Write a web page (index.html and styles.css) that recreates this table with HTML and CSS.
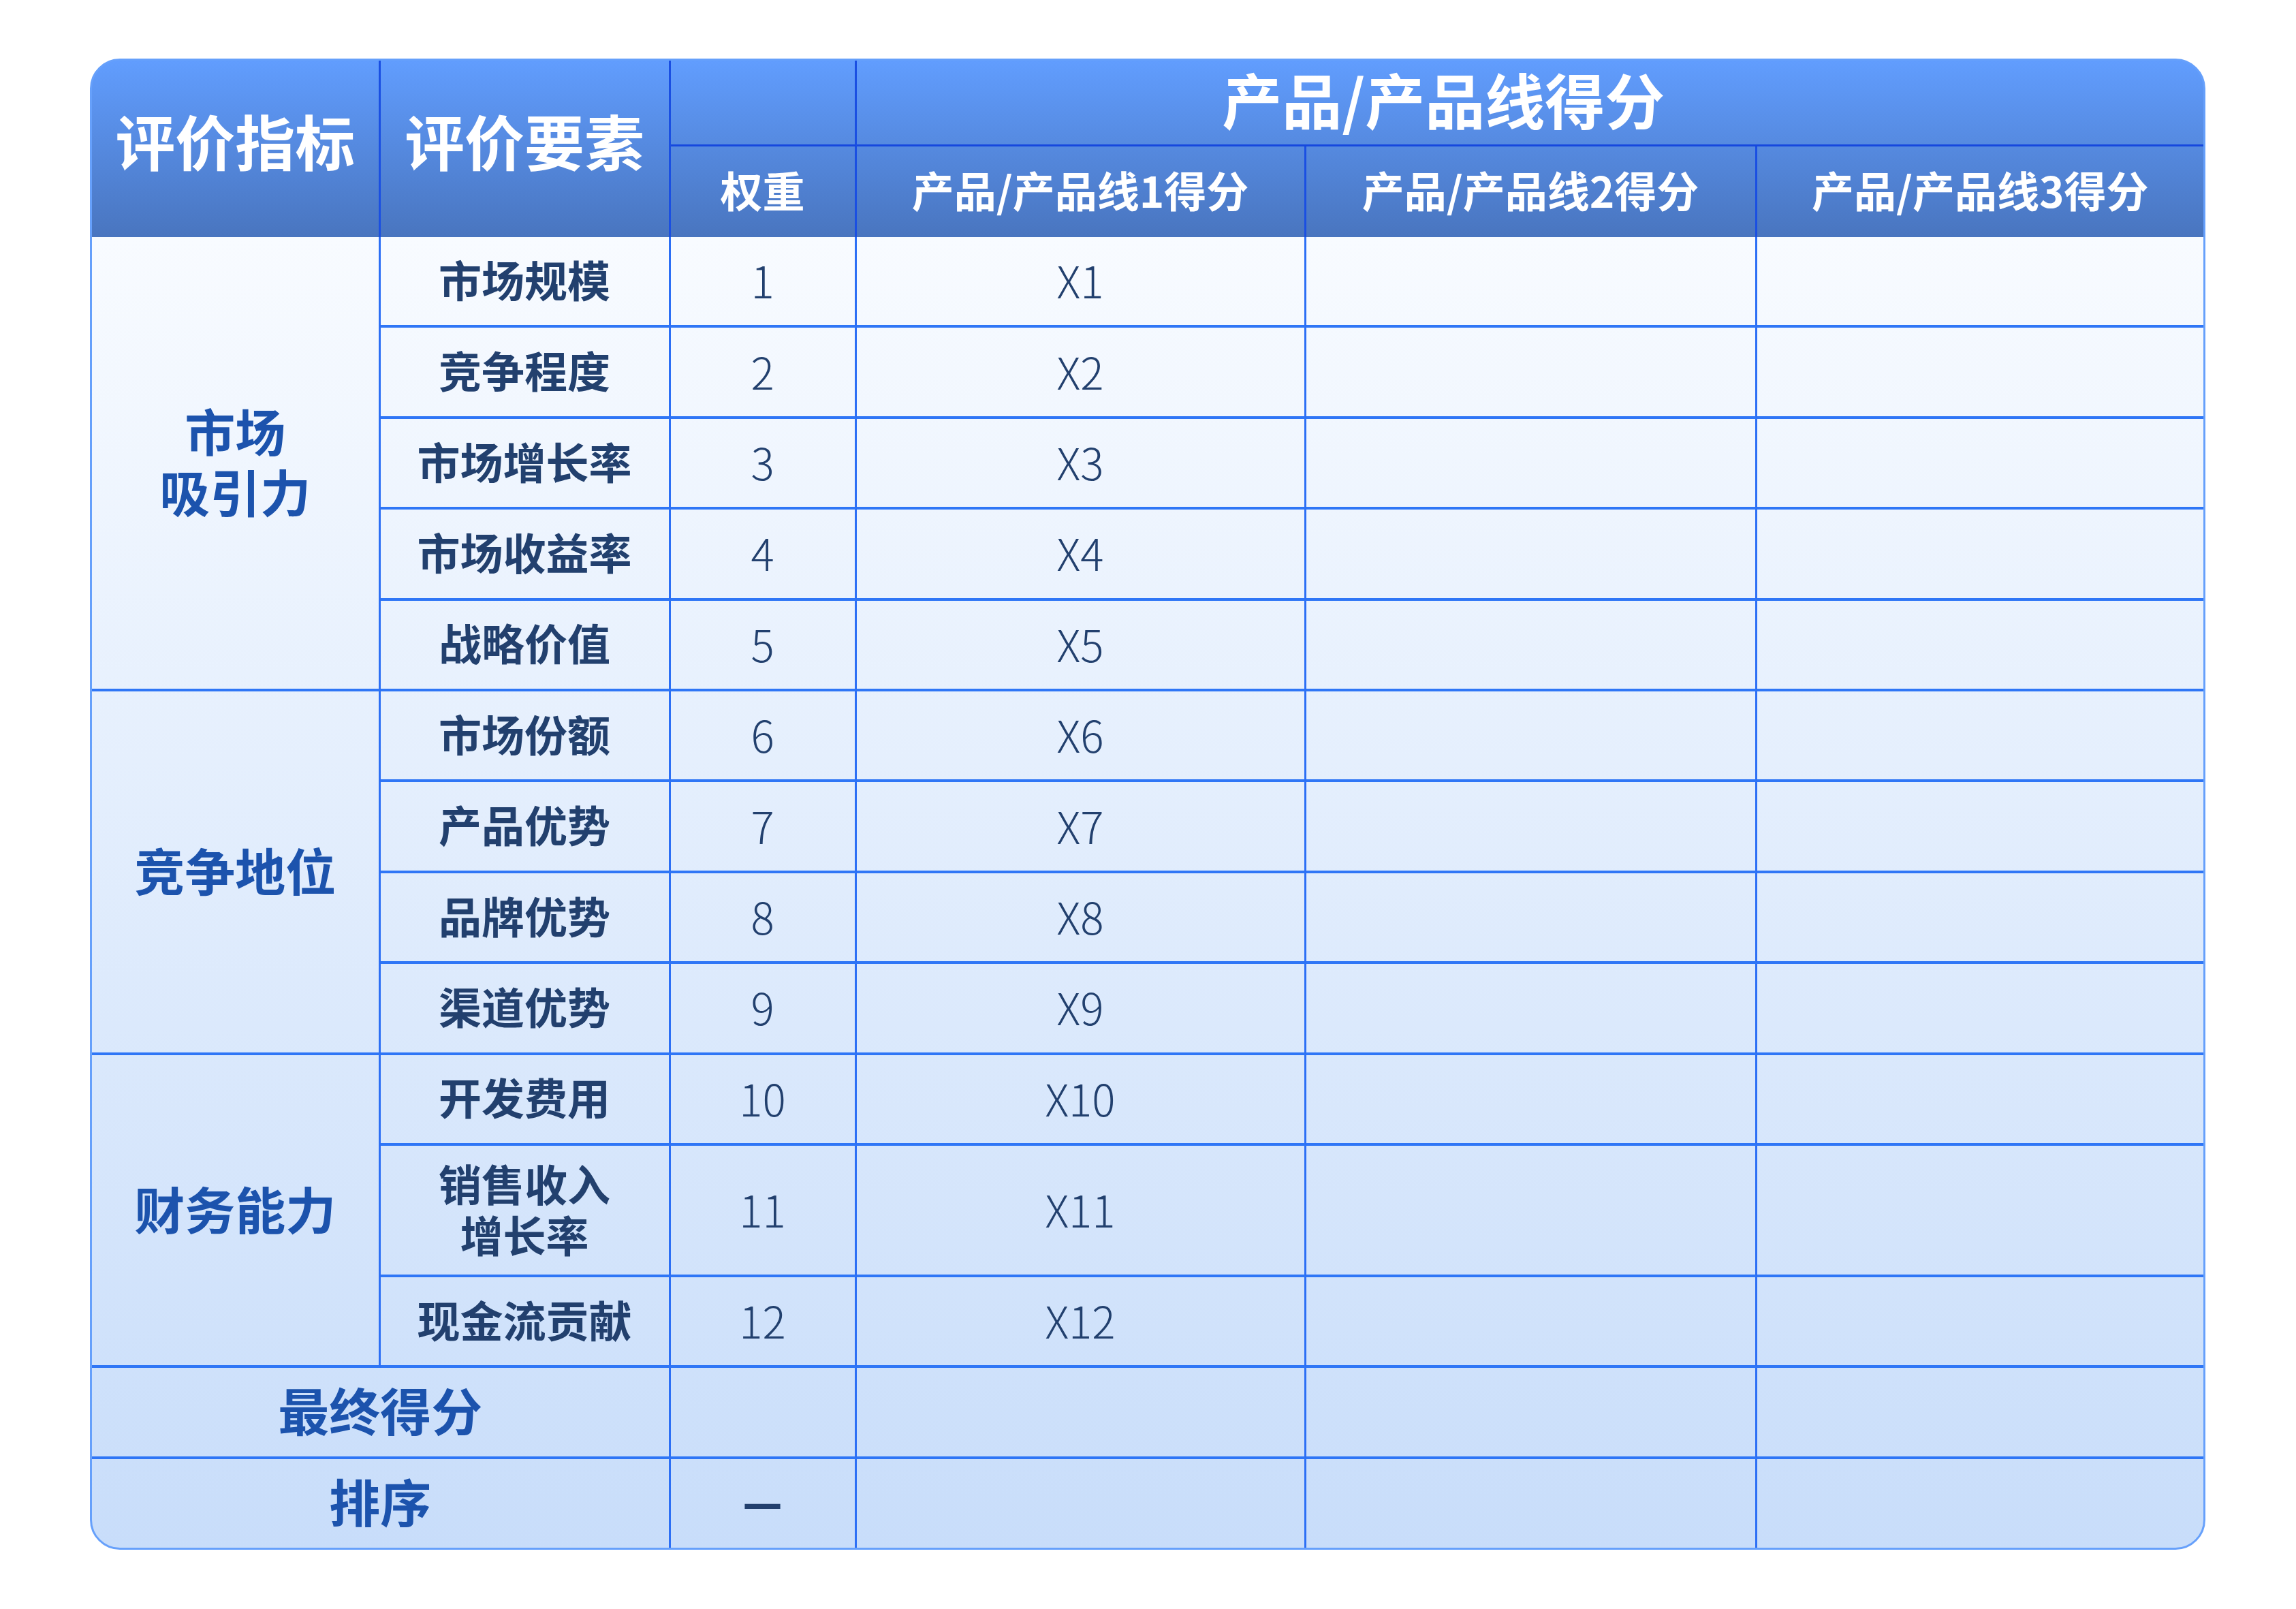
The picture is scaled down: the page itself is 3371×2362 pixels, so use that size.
FILE: index.html
```html
<!DOCTYPE html>
<html lang="zh-CN">
<head>
<meta charset="utf-8">
<title>评价指标表</title>
<link rel="stylesheet" href="styles.css">
</head>
<body>
<div class="table">
  <div class="h h-main vr">评价指标</div>
  <div class="h h-main vr">评价要素</div>
  <div class="h vr hb"></div>
  <div class="h h-title hb">产品/产品线得分</div>
  <div class="h h-sub vr">权重</div>
  <div class="h h-sub vr">产品/产品线1得分</div>
  <div class="h h-sub vr">产品/产品线2得分</div>
  <div class="h h-sub">产品/产品线3得分</div>

  <div class="c cat span5"><span class="ln">市场</span><span class="ln">吸引力</span></div>
  <div class="c item">市场规模</div><div class="c num">1</div><div class="c num">X1</div><div class="c"></div><div class="c lc"></div>
  <div class="c item">竞争程度</div><div class="c num">2</div><div class="c num">X2</div><div class="c"></div><div class="c lc"></div>
  <div class="c item">市场增长率</div><div class="c num">3</div><div class="c num">X3</div><div class="c"></div><div class="c lc"></div>
  <div class="c item">市场收益率</div><div class="c num">4</div><div class="c num">X4</div><div class="c"></div><div class="c lc"></div>
  <div class="c item">战略价值</div><div class="c num">5</div><div class="c num">X5</div><div class="c"></div><div class="c lc"></div>

  <div class="c cat span4">竞争地位</div>
  <div class="c item">市场份额</div><div class="c num">6</div><div class="c num">X6</div><div class="c"></div><div class="c lc"></div>
  <div class="c item">产品优势</div><div class="c num">7</div><div class="c num">X7</div><div class="c"></div><div class="c lc"></div>
  <div class="c item">品牌优势</div><div class="c num">8</div><div class="c num">X8</div><div class="c"></div><div class="c lc"></div>
  <div class="c item">渠道优势</div><div class="c num">9</div><div class="c num">X9</div><div class="c"></div><div class="c lc"></div>

  <div class="c cat span3">财务能力</div>
  <div class="c item">开发费用</div><div class="c num">10</div><div class="c num">X10</div><div class="c"></div><div class="c lc"></div>
  <div class="c item two"><span class="ln">销售收入</span><span class="ln">增长率</span></div><div class="c num">11</div><div class="c num">X11</div><div class="c"></div><div class="c lc"></div>
  <div class="c item">现金流贡献</div><div class="c num">12</div><div class="c num">X12</div><div class="c"></div><div class="c lc"></div>

  <div class="c cat wide">最终得分</div><div class="c"></div><div class="c"></div><div class="c"></div><div class="c lc"></div>
  <div class="c cat wide lr">排序</div><div class="c dash lr">—</div><div class="c lr"></div><div class="c lr"></div><div class="c lc lr"></div>
</div>
</body>
</html>
```
FILE: styles.css
```css
html, body {
  margin: 0;
  padding: 0;
  background: #ffffff;
}

body {
  font-family: "Noto Sans CJK SC", "Noto Sans", sans-serif;
}

.table {
  box-sizing: border-box;
  width: 3106px;
  margin: 86px 0 0 132px;
  border: 3px solid #66a0fb;
  border-radius: 44px;
  overflow: hidden;
  display: grid;
  grid-template-columns: 423.5px 426px 273px 660px 662px 655.5px;
  grid-template-rows: 126px 133px repeat(10, 133.4px) 193px 133.4px 133.4px 130.2px;
  background: linear-gradient(to bottom,
    #619dfe 0px, #4975bf 259px,
    #f8fbff 259px, #c8ddfa 100%);
}

.h {
  box-sizing: border-box;
  display: flex;
  align-items: center;
  justify-content: center;
  color: #ffffff;
  font-weight: 700;
  line-height: 1.2;
  white-space: nowrap;
}

.h-main {
  font-size: 88px;
  grid-row: span 2;
  padding-bottom: 28px;
}

.h-title {
  font-size: 88px;
  line-height: 1;
  grid-column: span 3;
  padding-right: 254px;
  padding-bottom: 14px;
}

.h-sub {
  font-size: 62px;
  padding-bottom: 6px;
}

.vr {
  border-right: 3px solid #1a4fe2;
}

.hb {
  border-bottom: 3px solid #1648de;
}

.c {
  box-sizing: border-box;
  display: flex;
  flex-direction: column;
  align-items: center;
  justify-content: center;
  text-align: center;
  border-right: 3px solid #2c6ff5;
  border-bottom: 4px solid #2f76f6;
  color: #22406e;
  white-space: nowrap;
}

.ln {
  display: block;
}

.lc {
  border-right: none;
}

.lr {
  border-bottom: none;
}

.item {
  font-size: 63px;
  font-weight: 700;
  line-height: 1.2;
  padding-bottom: 8px;
}

.item.two {
  line-height: 75px;
  padding-bottom: 6px;
}

.num {
  font-size: 64px;
  font-weight: 300;
  line-height: 1.2;
  padding-bottom: 4px;
}

.dash {
  font-size: 64px;
  font-weight: 900;
  padding-bottom: 10px;
}

.cat {
  font-size: 74px;
  font-weight: 700;
  color: #1c53ad;
  line-height: 89px;
  padding-bottom: 8px;
}

.span5 { grid-row: span 5; }
.span4 { grid-row: span 4; }
.span3 { grid-row: span 3; }

.wide {
  grid-column: span 2;
  font-size: 75px;
}
```
